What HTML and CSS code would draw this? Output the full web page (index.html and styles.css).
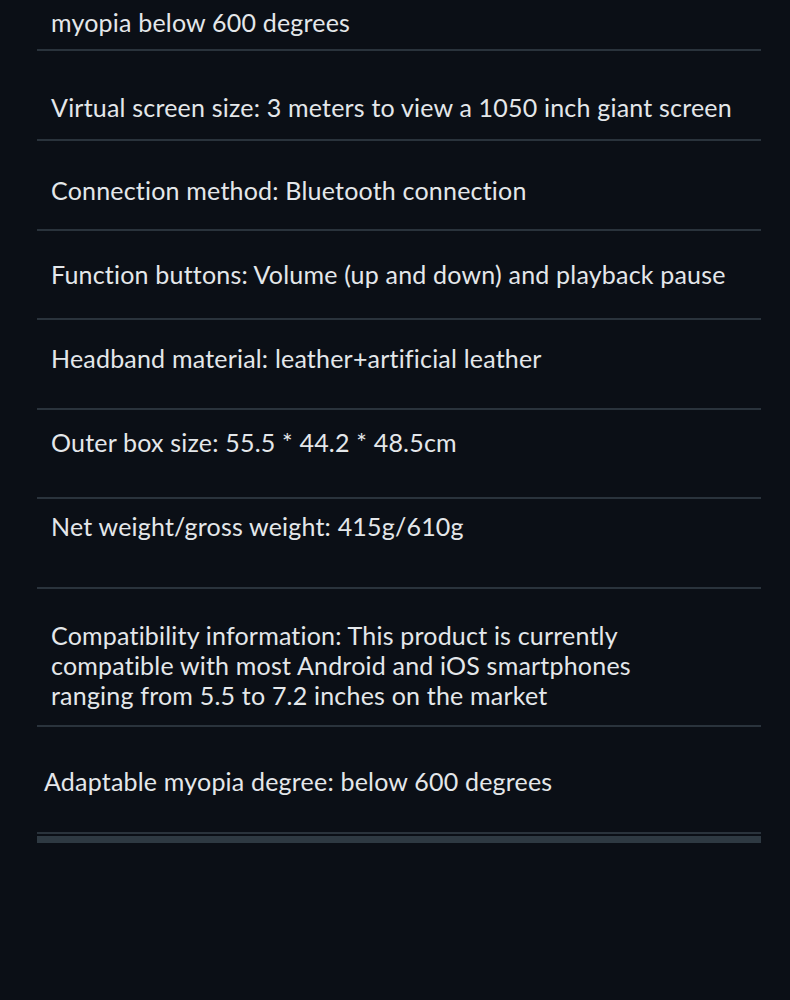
FILE: index.html
```html
<!DOCTYPE html>
<html>
<head>
<meta charset="utf-8">
<link rel="stylesheet" href="styles.css">
</head>
<body>
<div class="specs">
  <div class="row r0"><p class="txt">myopia below 600 degrees</p></div>
  <div class="row r1"><p class="txt">Virtual screen size: 3 meters to view a 1050 inch giant screen</p></div>
  <div class="row r2"><p class="txt">Connection method: Bluetooth connection</p></div>
  <div class="row r3"><p class="txt">Function buttons: Volume (up and down) and playback pause</p></div>
  <div class="row r4"><p class="txt">Headband material: leather+artificial leather</p></div>
  <div class="row r5"><p class="txt">Outer box size: 55.5 * 44.2 * 48.5cm</p></div>
  <div class="row r6"><p class="txt">Net weight/gross weight: 415g/610g</p></div>
  <div class="row r7"><p class="txt wrap">Compatibility information: This product is currently compatible with most Android and iOS smartphones ranging from 5.5 to 7.2 inches on the market</p></div>
  <div class="row r8"><p class="txt">Adaptable myopia degree: below 600 degrees</p></div>
  <div class="bar"></div>
</div>
</body>
</html>
```

FILE: styles.css
```css
html, body {
  margin: 0;
  padding: 0;
  background: #0b0f16;
}
body {
  font-family: "Lato", "Open Sans", sans-serif;
  color: #e4e7ea;
}
.specs {
  margin: 0 29px 0 37px;
  display: flex;
  flex-direction: column;
}
.row {
  box-sizing: border-box;
  border-bottom: 2px solid #2a333c;
  padding: 0 14px;
}
.txt {
  margin: 0;
  font-size: 25px;
  letter-spacing: 0.2px;
  line-height: 30px;
  white-space: nowrap;
}
.txt.wrap {
  white-space: normal;
  max-width: 610px;
}
.r0 { height: 51px; padding-top: 7px; }
.r1 { height: 90px; padding-top: 41px; }
.r2 { height: 90px; padding-top: 34px; }
.r3 { height: 89px; padding-top: 28px; }
.r4 { height: 90px; padding-top: 23px; }
.r5 { height: 89px; padding-top: 17px; }
.r6 { height: 90px; padding-top: 12px; }
.r7 { height: 138px; padding-top: 31px; }
.r8 { height: 107px; padding: 39px 7px 0; }
.bar {
  margin-top: 2px;
  height: 7px;
  background: #2e3942;
}
```
